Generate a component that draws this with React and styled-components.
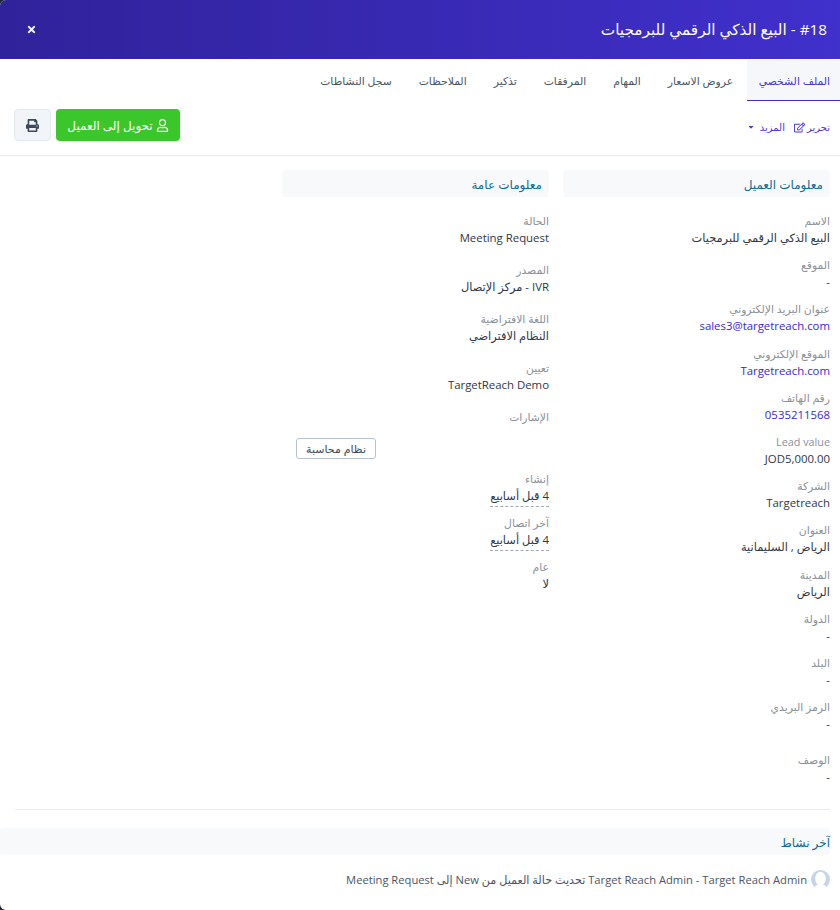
import styled, { createGlobalStyle } from "styled-components";
import { FaTimes, FaPrint, FaRegEdit, FaCaretDown, FaRegUser } from "react-icons/fa";

const GlobalStyle = createGlobalStyle`
  html, body {
    margin: 0;
    padding: 0;
    background: #1d2a33;
  }
  body {
    font-family: "Open Sans", "DejaVu Sans", sans-serif;
    font-size: 12px;
    color: #2d3748;
  }
`;

const tabs = ["الملف الشخصي", "عروض الاسعار", "المهام", "المرفقات", "تذكير", "الملاحظات", "سجل النشاطات"];

const customerFields = [
  { label: "الاسم", value: "البيع الذكي الرقمي للبرمجيات" },
  { label: "الموقع", value: "-" },
  { label: "عنوان البريد الإلكتروني", value: "sales3@targetreach.com", link: true },
  { label: "الموقع الإلكتروني", value: "Targetreach.com", link: true },
  { label: "رقم الهاتف", value: "0535211568", link: true },
  { label: "Lead value", value: "JOD5,000.00" },
  { label: "الشركة", value: "Targetreach" },
  { label: "العنوان", value: "الرياض , السليمانية" },
  { label: "المدينة", value: "الرياض" },
  { label: "الدولة", value: "-" },
  { label: "البلد", value: "-" },
  { label: "الرمز البريدي", value: "-" },
];

const generalFields = [
  { label: "الحالة", value: "Meeting Request" },
  { label: "المصدر", value: "IVR - مركز الإتصال" },
  { label: "اللغة الافتراضية", value: "النظام الافتراضي" },
  { label: "تعيين", value: "TargetReach Demo" },
];

const Field = ({ label, value, link, dashed, step }) => (
  <FieldBox $step={step}>
    <FieldLabel>{label}</FieldLabel>
    <FieldValue $link={link} $dashed={dashed}>
      {value}
    </FieldValue>
  </FieldBox>
);

const App = () => (
  <Page dir="rtl">
    <GlobalStyle />
    <Header>
      <Title>#18 - البيع الذكي الرقمي للبرمجيات</Title>
      <CloseIcon />
    </Header>

    <TabBar>
      {tabs.map((tab, i) => (
        <Tab key={tab} $active={i === 0}>
          {tab}
        </Tab>
      ))}
    </TabBar>

    <Toolbar>
      <ToolLinks>
        <ToolLink>
          تحرير <FaRegEdit size={11} />
        </ToolLink>
        <ToolLink>
          المزيد <Caret size={8} />
        </ToolLink>
      </ToolLinks>
      <ToolButtons>
        <ConvertButton>
          <FaRegUser size={13} /> تحويل إلى العميل
        </ConvertButton>
        <PrintButton>
          <FaPrint size={13} />
        </PrintButton>
      </ToolButtons>
    </Toolbar>

    <Columns>
      <Column>
        <SectionTitle>معلومات العميل</SectionTitle>
        <FieldList>
          {customerFields.map((f) => (
            <Field key={f.label} {...f} />
          ))}
          <DescriptionField>
            <Field label="الوصف" value="-" />
          </DescriptionField>
        </FieldList>
      </Column>
      <Column>
        <SectionTitle>معلومات عامة</SectionTitle>
        <FieldList>
          {generalFields.map((f) => (
            <Field key={f.label} step={48.9} {...f} />
          ))}
          <FieldLabel>الإشارات</FieldLabel>
          <TagRow>
            <Tag>نظام محاسبة</Tag>
          </TagRow>
          <Field label="إنشاء" value="4 قبل أسابيع" step={44} dashed />
          <Field label="آخر اتصال" value="4 قبل أسابيع" step={44} dashed />
          <Field label="عام" value="لا" step={44} />
        </FieldList>
      </Column>
    </Columns>

    <Divider />

    <ActivityTitle>آخر نشاط</ActivityTitle>
    <ActivityRow>
      <Avatar viewBox="0 0 20 20">
        <circle cx="10" cy="10" r="10" fill="#c9d3e6" />
        <ellipse cx="10" cy="9" rx="5.6" ry="7.2" fill="#fff" />
        <path d="M3 20c1-4 4-5 7-5s6 1 7 5z" fill="#fff" />
      </Avatar>
      <ActivityText>
        Target Reach Admin - Target Reach Admin تحديث حالة العميل من New إلى Meeting Request
      </ActivityText>
    </ActivityRow>
  </Page>
);

export default App;

const Page = styled.div`
  width: 840px;
  height: 910px;
  background: #fff;
  border-radius: 6px 0 0 6px;
  overflow: hidden;
`;

const Header = styled.header`
  height: 59px;
  display: flex;
  align-items: center;
  justify-content: space-between;
  padding: 0 13px 0 26px;
  background: linear-gradient(to left, #4030cc, #30229a);
  color: #fff;
`;

const Title = styled.h1`
  margin: 0;
  font-size: 15.3px;
  font-weight: 500;
  line-height: 1;
  color: #fff;
`;

const CloseIcon = styled(FaTimes)`
  font-size: 11px;
  color: #f1f1f8;
`;

const TabBar = styled.nav`
  height: 41px;
  margin-top: 1px;
  display: flex;
  align-items: stretch;
  box-sizing: border-box;
`;

const Tab = styled.a`
  padding: ${(props) => (props.$active ? "0 10px 0 12px" : "0 13.5px")};
  display: flex;
  align-items: center;
  font-size: 10.8px;
  color: ${(props) => (props.$active ? "#4a38c9" : "#4b5563")};
  background: ${(props) => (props.$active ? "#f5f7fa" : "transparent")};
  border-bottom: 1px solid ${(props) => (props.$active ? "#3f2fc0" : "transparent")};
`;

const Toolbar = styled.div`
  height: 55px;
  padding: 8px 10px 0 14px;
  box-sizing: border-box;
  display: flex;
  justify-content: space-between;
  align-items: flex-start;
  border-bottom: 1px solid #e9ebef;
`;

const ToolLinks = styled.div`
  display: flex;
  gap: 9px;
  padding-top: 11px;
`;

const ToolLink = styled.a`
  display: flex;
  align-items: center;
  gap: 2px;
  font-size: 10px;
  color: #4a38c9;
`;

const Caret = styled(FaCaretDown)`
  margin-right: 3px;
`;

const ToolButtons = styled.div`
  display: flex;
  gap: 5px;
`;

const ConvertButton = styled.button`
  width: 124px;
  height: 32px;
  padding: 0;
  display: flex;
  align-items: center;
  justify-content: center;
  gap: 3px;
  font: inherit;
  font-size: 12px;
  color: #fff;
  background: #3bc72c;
  border: 0;
  border-radius: 4px;
`;

const PrintButton = styled.button`
  width: 37px;
  height: 32px;
  padding: 0;
  display: flex;
  align-items: center;
  justify-content: center;
  color: #3d4a5c;
  background: #f1f5f9;
  border: 1px solid #e2e8f0;
  border-radius: 4px;
`;

const Columns = styled.div`
  display: grid;
  grid-template-columns: 267px 267px;
  gap: 14px;
  padding: 14px 10px 0 0;
`;

const Column = styled.section`
  min-width: 0;
`;

const SectionTitle = styled.h4`
  margin: 0;
  height: 27px;
  padding: 1px 7px 0;
  box-sizing: border-box;
  display: flex;
  align-items: center;
  font-size: 12px;
  font-weight: 500;
  color: #0c6b96;
  background: #f8f9fb;
  border-radius: 4px;
`;

const FieldList = styled.div`
  padding-top: 14px;
  min-height: 598px;
`;

const FieldBox = styled.div`
  height: ${(props) => props.$step || 44.2}px;
`;

const FieldLabel = styled.div`
  height: 18px;
  line-height: 20px;
  font-size: 10.8px;
  color: #8a9099;
`;

const FieldValue = styled.div`
  width: fit-content;
  height: 17px;
  line-height: 17px;
  font-size: 11.4px;
  font-weight: 500;
  color: ${(props) => (props.$link ? "#3b28cc" : "#2d3748")};
  border-bottom: ${(props) => (props.$dashed ? "1px dashed #a3a9b3" : "0")};
  padding-bottom: ${(props) => (props.$dashed ? "2px" : "0")};
`;

const DescriptionField = styled.div`
  margin-top: 9px;
`;

const TagRow = styled.div`
  height: 44.2px;
  padding: 13px 0 0 14px;
  box-sizing: border-box;
  display: flex;
  justify-content: flex-end;
`;

const Tag = styled.span`
  width: 80px;
  height: 21px;
  box-sizing: border-box;
  display: flex;
  align-items: center;
  justify-content: center;
  font-size: 11px;
  color: #3f4854;
  border: 1px solid #b5c2d1;
  border-radius: 3px;
`;

const Divider = styled.hr`
  margin: 0 10px 0 15px;
  border: 0;
  border-top: 1px solid #e9ebef;
`;

const ActivityTitle = styled.h4`
  margin: 18px 10px 0 0;
  height: 27px;
  padding: 1px 0 0;
  box-sizing: border-box;
  display: flex;
  align-items: center;
  font-size: 12px;
  font-weight: 500;
  color: #0c6b96;
  background: #f8f9fb;
  border-radius: 4px;
`;

const ActivityRow = styled.div`
  display: flex;
  align-items: center;
  gap: 4px;
  padding: 15px 10px 0 0;
`;

const Avatar = styled.svg`
  width: 19px;
  height: 19px;
  flex: none;
`;

const ActivityText = styled.span`
  font-size: 11.2px;
  color: #4b5563;
`;
